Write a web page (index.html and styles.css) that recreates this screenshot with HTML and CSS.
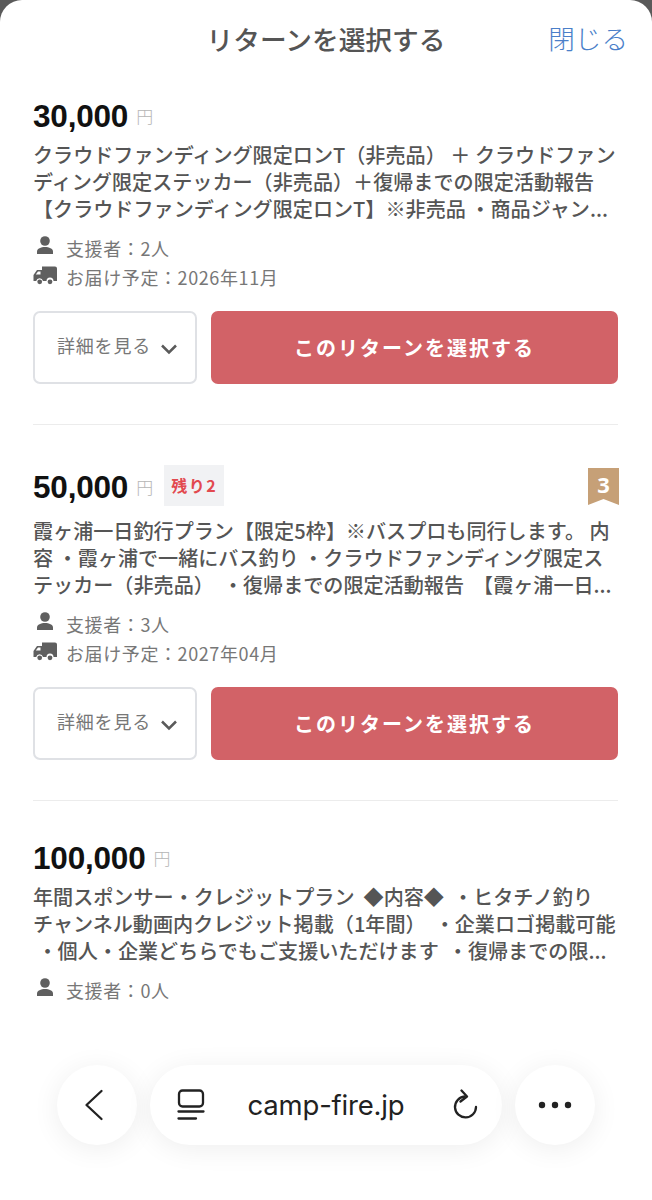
FILE: index.html
```html
<!DOCTYPE html>
<html lang="ja">
<head>
<meta charset="utf-8">
<title>リターンを選択する</title>
<link rel="stylesheet" href="styles.css">
</head>
<body>
<div class="sheet">
  <header class="head">
    <h1 class="title">リターンを選択する</h1>
    <a class="close">閉じる</a>
  </header>

  <section class="ret first">
    <div class="price-row">
      <span class="price">30,000</span><span class="yen">円</span>
    </div>
    <p class="desc">
      <span class="ln">クラウドファンディング限定ロンT（非売品） ＋ クラウドファン</span>
      <span class="ln">ディング限定ステッカー（非売品）＋復帰までの限定活動報告</span>
      <span class="ln">【クラウドファンディング限定ロンT】※非売品 ・商品ジャン...</span>
    </p>
    <div class="meta">
      <svg class="ic" viewBox="0 0 24 24"><use href="#person"/></svg><span>支援者：2人</span>
    </div>
    <div class="meta">
      <svg class="ic" viewBox="0 0 24 24"><use href="#truck"/></svg><span>お届け予定：2026年11月</span>
    </div>
    <div class="actions">
      <button class="detail"><span class="detail-label">詳細を見る</span><svg class="chev" viewBox="0 0 18 12"><path d="M2 2.500 9 9.500 16 2.500"/></svg></button>
      <button class="select">このリターンを選択する</button>
    </div>
  </section>

  <section class="ret">
    <div class="price-row tall">
      <span class="price">50,000</span><span class="yen">円</span><span class="left">残り2</span>
      <svg class="rank" viewBox="0 0 31 37"><path d="M0 0H31V37L15.500 31 0 37Z"/><text x="15.500" y="25" text-anchor="middle">3</text></svg>
    </div>
    <p class="desc">
      <span class="ln">霞ヶ浦一日釣行プラン【限定5枠】※バスプロも同行します。 内</span>
      <span class="ln">容 ・霞ヶ浦で一緒にバス釣り ・クラウドファンディング限定ス</span>
      <span class="ln">テッカー（非売品）  ・復帰までの限定活動報告  【霞ヶ浦一日...</span>
    </p>
    <div class="meta">
      <svg class="ic" viewBox="0 0 24 24"><use href="#person"/></svg><span>支援者：3人</span>
    </div>
    <div class="meta">
      <svg class="ic" viewBox="0 0 24 24"><use href="#truck"/></svg><span>お届け予定：2027年04月</span>
    </div>
    <div class="actions">
      <button class="detail"><span class="detail-label">詳細を見る</span><svg class="chev" viewBox="0 0 18 12"><path d="M2 2.500 9 9.500 16 2.500"/></svg></button>
      <button class="select">このリターンを選択する</button>
    </div>
  </section>

  <section class="ret last">
    <div class="price-row">
      <span class="price">100,000</span><span class="yen">円</span>
    </div>
    <p class="desc">
      <span class="ln">年間スポンサー・クレジットプラン  ◆内容◆  ・ヒタチノ釣り</span>
      <span class="ln">チャンネル動画内クレジット掲載（1年間）  ・企業ロゴ掲載可能</span>
      <span class="ln"> ・個人・企業どちらでもご支援いただけます  ・復帰までの限...</span>
    </p>
    <div class="meta">
      <svg class="ic" viewBox="0 0 24 24"><use href="#person"/></svg><span>支援者：0人</span>
    </div>
  </section>
</div>

<nav class="bar">
  <button class="round" aria-label="戻る">
    <svg class="nav-ic back" viewBox="0 0 20 32"><path d="M17.500 2 2.500 16 17.500 30"/></svg>
  </button>
  <div class="pill">
    <svg class="nav-ic tabs" viewBox="0 0 28 32"><rect x="2" y="1.500" width="24" height="16" rx="3.500"/><path d="M1.500 22.500H26.500M1.500 29.500H19"/></svg>
    <span class="url">camp-fire.jp</span>
    <svg class="nav-ic reload" viewBox="0 0 26 32"><path d="M12.500 7.500A10.500 10.500 0 1 0 24 18"/><path d="M9.500 1.500 15 7.500 8.500 12.500"/></svg>
  </div>
  <button class="round" aria-label="その他">
    <svg class="dots" viewBox="0 0 34 8"><circle cx="4" cy="4" r="3.200"/><circle cx="17" cy="4" r="3.200"/><circle cx="30" cy="4" r="3.200"/></svg>
  </button>
</nav>

<svg class="defs" aria-hidden="true">
  <symbol id="person" viewBox="0 0 24 24"><circle cx="12" cy="7" r="4.800"/><path d="M4 20V17.500C4 14.500 8 13 12 13S20 14.500 20 17.500V20Z"/></symbol>
  <symbol id="truck" viewBox="0 0 24 24"><path d="M9 3.500H22Q24 3.500 24 5.500V18H20.500A3.500 3.500 0 0 0 13.500 18H10A3.500 3.500 0 0 0 3.200 18H.500V12L4 7H9ZM2.800 11.500H7.500V8.500H5Z" fill-rule="evenodd"/><circle cx="6.700" cy="18.800" r="2.400"/><circle cx="17" cy="18.800" r="2.400"/></symbol>
</svg>
</body>
</html>
```

FILE: styles.css
```css
* { box-sizing: border-box; }

html, body {
  margin: 0;
  padding: 0;
}

body {
  position: relative;
  width: 652px;
  height: 1200px;
  overflow: hidden;
  background: #5a5a5a;
  font-family: "Liberation Sans", "Noto Sans CJK JP", sans-serif;
}

.sheet {
  height: 1200px;
  padding: 0 34px 0 33px;
  background: #fff;
  border-radius: 22px 22px 0 0;
}

.head {
  position: relative;
  display: flex;
  justify-content: center;
  align-items: center;
  height: 76px;
  margin-left: 1px;
}

.title {
  margin: 0;
  font-size: 26.700px;
  font-weight: 500;
  color: #555;
  font-family: "Noto Sans CJK JP", sans-serif;
}

.close {
  position: absolute;
  right: -10px;
  top: 19px;
  font-size: 26.600px;
  line-height: 38px;
  color: #4a7fc9;
  font-family: "Noto Sans CJK JP", sans-serif;
  font-weight: 300;
}

.ret {
  padding: 0 0 40px;
  border-bottom: 1px solid #ececec;
  margin-bottom: 37px;
}

.ret.first {
  padding-top: 20px;
}

.ret.last {
  border-bottom: 0;
}

.price-row {
  display: flex;
  align-items: center;
  height: 42px;
}

.price-row.tall {
  height: 52px;
}

.price {
  margin-top: -2px;
  font-size: 31.500px;
  font-weight: 700;
  color: #111;
  letter-spacing: -.2px;
}

.yen {
  margin: -4px 0 0 8px;
  font-size: 17px;
  color: #b5b5b5;
  font-family: "Noto Sans CJK JP", sans-serif;
  font-weight: 300;
}

.left {
  display: flex;
  align-items: center;
  justify-content: center;
  width: 60px;
  height: 41px;
  margin: -6px 0 0 11px;
  background: #f1f2f4;
  color: #e2494f;
  font-size: 16px;
  font-weight: 700;
  letter-spacing: 1.500px;
  font-family: "Noto Sans CJK JP", sans-serif;
}

.rank {
  width: 31px;
  height: 37px;
  margin: -3px -1px 0 auto;
  fill: #c6a077;
}

.rank text {
  fill: #fff;
  font-size: 22px;
  font-weight: 700;
  font-family: "Noto Sans", sans-serif;
}

.desc {
  margin: 3px 0 11px;
  font-family: "Noto Sans CJK JP", sans-serif;
  font-size: 20.100px;
  font-weight: 500;
  line-height: 27px;
  color: #555;
}

.ln {
  display: block;
  white-space: pre;
}

.meta {
  display: flex;
  align-items: center;
  height: 29px;
  font-family: "Noto Sans CJK JP", sans-serif;
  font-size: 18px;
  font-weight: 400;
  letter-spacing: .6px;
  color: #777;
}

.ic {
  width: 24px;
  height: 24px;
  margin-right: 9px;
  margin-top: -4px;
  fill: #5f5f5f;
}

.actions {
  display: flex;
  gap: 14px;
  margin-top: 20px;
}

.detail,
.select {
  height: 73px;
  border-radius: 7px;
  font-family: "Noto Sans CJK JP", sans-serif;
}

.detail {
  display: flex;
  align-items: center;
  justify-content: center;
  gap: 9px;
  width: 164px;
  padding: 0 0 0 5px;
  background: #fff;
  border: 2px solid #dfe1e5;
  color: #777;
  font-size: 18px;
  font-weight: 400;
  letter-spacing: .8px;
}

.detail-label {
  margin-top: -5px;
}

.chev {
  width: 18px;
  height: 12px;
  margin-top: 3px;
  fill: none;
  stroke: #5a5a5a;
  stroke-width: 2.500;
}

.select {
  flex: 1;
  border: 0;
  background: #d26267;
  color: #fff;
  font-size: 20px;
  font-weight: 700;
  letter-spacing: 2px;
}

.bar {
  position: absolute;
  left: 57px;
  top: 1065px;
  display: flex;
  gap: 13px;
}

.round,
.pill {
  height: 80px;
  background: #fff;
  border: 0;
  border-radius: 40px;
  box-shadow: 0 4px 28px rgba(0, 0, 0, .07);
}

.round {
  display: flex;
  align-items: center;
  justify-content: center;
  width: 80px;
  padding: 0;
}

.pill {
  display: flex;
  align-items: center;
  width: 352px;
  padding: 0 24px 0 27px;
}

.url {
  margin: 0 auto;
  padding-right: 5px;
  font-family: "Inter", sans-serif;
  font-size: 27.500px;
  color: #222;
  letter-spacing: -.2px;
}

.nav-ic {
  fill: none;
  stroke: #222;
  stroke-width: 2.300;
  stroke-linecap: round;
  stroke-linejoin: round;
}

.back {
  width: 20px;
  height: 32px;
  margin-left: -6px;
}

.tabs {
  width: 28px;
  height: 32px;
}

.reload {
  width: 26px;
  height: 32px;
}

.dots {
  width: 34px;
  height: 8px;
  fill: #222;
}

.defs {
  position: absolute;
  width: 0;
  height: 0;
}
```
